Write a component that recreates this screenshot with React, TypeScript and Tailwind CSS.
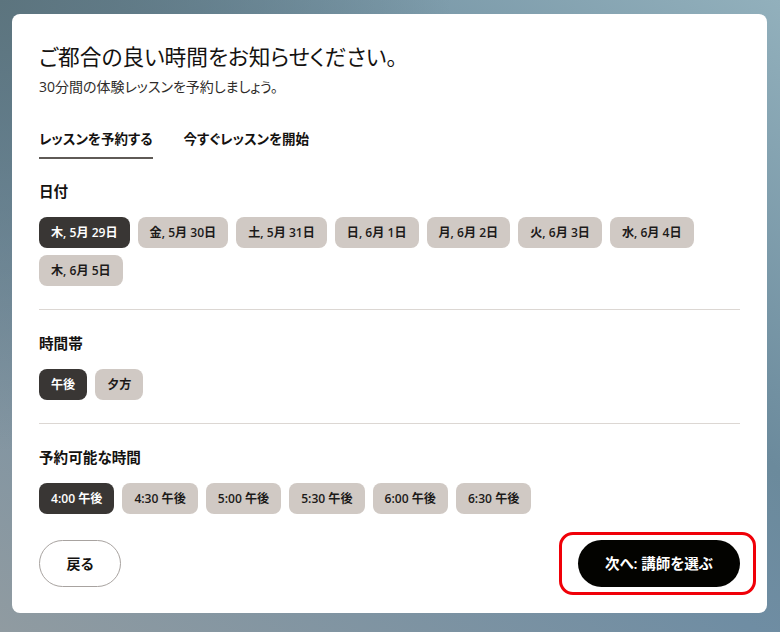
const FONT = "font-['Open_Sans','Noto_Sans_CJK_JP',sans-serif] [font-feature-settings:'palt']";

const DATES = ['木, 5月 29日', '金, 5月 30日', '土, 5月 31日', '日, 6月 1日', '月, 6月 2日', '火, 6月 3日', '水, 6月 4日', '木, 6月 5日'];
const PERIODS = ['午後', '夕方'];
const TIMES = ['4:00 午後', '4:30 午後', '5:00 午後', '5:30 午後', '6:00 午後', '6:30 午後'];

function Chip({ label, active }: { label: string; active?: boolean }) {
  return (
    <button
      className={
        active
          ? 'h-[31px] rounded-lg bg-[#393634] px-3 pt-px text-[12.1px] font-semibold text-white'
          : 'h-[31px] rounded-lg bg-[#d0c9c4] px-3 pt-px text-[12.1px] font-semibold text-[#1c1a19]'
      }
    >
      {label}
    </button>
  );
}

function Section({ title, items }: { title: string; items: string[] }) {
  return (
    <div>
      <h3 className="text-[14.6px] leading-5 font-semibold text-[#141210]">{title}</h3>
      <div className="mt-4 flex flex-wrap gap-x-2 gap-y-[7px]">
        {items.map((item, i) => (
          <Chip key={item} label={item} active={i === 0} />
        ))}
      </div>
    </div>
  );
}

export default function App() {
  return (
    <div className={`${FONT} h-[632px] w-[780px] overflow-hidden bg-[radial-gradient(circle_at_0%_0%,#5c747e_0%,#5c747e00_45%),linear-gradient(35deg,#909ba1_0%,#6f8da3_45%,#6b8a9c_60%,#92b0bc_100%)] pt-[14px] pl-3`}>
      <div className="h-[599px] w-[755px] rounded-lg bg-white px-[27px] pt-[27px]">
        <h1 className="text-[21.7px] leading-8 text-[#141210]">ご都合の良い時間をお知らせください。</h1>
        <p className="mt-[4px] text-sm leading-5 text-[#2e2b29]">30分間の体験レッスンを予約しましょう。</p>

        <div className="mt-[24px] flex gap-8 text-[13.5px] font-semibold text-[#141210]">
          <div className="h-[38px] border-b-2 border-[#5f5a56] pt-2 leading-5">レッスンを予約する</div>
          <div className="-ml-px pt-2 leading-5">今すぐレッスンを開始</div>
        </div>

        <div className="mt-[22px]">
          <Section title="日付" items={DATES} />
        </div>
        <hr className="mt-[23px] border-[#dcd7d3]" />
        <div className="mt-[23px]">
          <Section title="時間帯" items={PERIODS} />
        </div>
        <hr className="mt-[23px] border-[#dcd7d3]" />
        <div className="mt-[23px]">
          <Section title="予約可能な時間" items={TIMES} />
        </div>

        <div className="mt-[26px] flex justify-between">
          <button className="h-[47px] w-[82px] rounded-full border border-[#a8a3a0] bg-white text-sm font-semibold text-[#141210]">戻る</button>
          <div className="relative">
            <button className="h-[47px] w-[162px] rounded-full bg-[#030300] text-[14.5px] font-semibold text-white">次へ: 講師を選ぶ</button>
            <div className="absolute -top-2 -right-4 -bottom-2 -left-[19px] rounded-[14px] border-[3px] border-[#f00008]" />
          </div>
        </div>
      </div>
    </div>
  );
}
